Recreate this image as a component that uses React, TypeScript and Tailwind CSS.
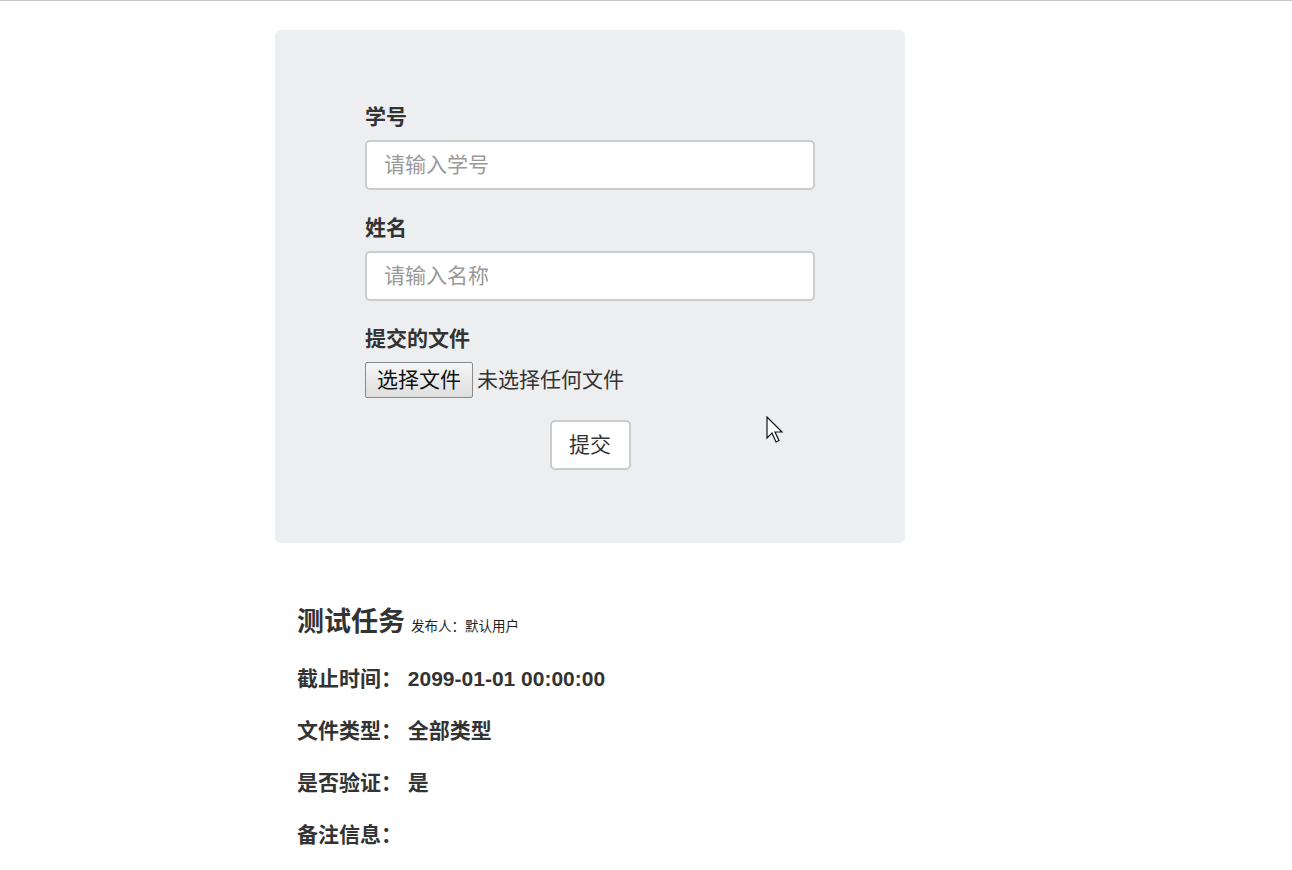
import React from "react";

export default function App() {
  const font = { fontFamily: '"Liberation Sans", "Noto Sans CJK SC", sans-serif' };
  return (
    <div className="min-h-[870px] w-full bg-white text-[#333]" style={font}>
      <div className="h-px w-full bg-[#c8c8c8]" />
      <div className="ml-[275px] mt-[29px] w-[630px] rounded-[6px] bg-[#eceeef] pt-[72px] pb-[73px] relative">
        <div className="ml-[90px] w-[450px]">
          <div className="h-[30px] text-[21px] font-bold leading-[30px] mb-[8px]">学号</div>
          <input
            className="block h-[50px] w-[450px] rounded-[5px] border-2 border-[#cccccc] bg-white px-[17px] text-[21px] outline-none placeholder:text-[#999]"
            placeholder="请输入学号"
            style={font}
          />
          <div className="mt-[23px] h-[30px] text-[21px] font-bold leading-[30px] mb-[8px]">姓名</div>
          <input
            className="block h-[50px] w-[450px] rounded-[5px] border-2 border-[#cccccc] bg-white px-[17px] text-[21px] outline-none placeholder:text-[#999]"
            placeholder="请输入名称"
            style={font}
          />
          <div className="mt-[23px] h-[30px] text-[21px] font-bold leading-[30px] mb-[8px]">提交的文件</div>
          <div className="flex h-[36px] items-center">
            <div className="flex h-[36px] w-[108px] items-center justify-center rounded-[2px] border border-[#8a8a8a] bg-gradient-to-b from-[#f6f6f6] to-[#dedede] text-[21px] font-normal text-[#111]">
              选择文件
            </div>
            <span className="ml-[4px] text-[21px] text-[#333]">未选择任何文件</span>
          </div>
          <div className="mt-[22px] flex justify-center">
            <button
              className="h-[50px] w-[81px] rounded-[5px] border-2 border-[#cccccc] bg-white text-[21px] text-[#333]"
              style={font}
            >
              提交
            </button>
          </div>
        </div>
        <svg className="absolute left-[491px] top-[386px]" width="20" height="28" viewBox="0 0 20 28">
          <path d="M1 1 L1 22 L6 17 L10 26 L13 24.5 L9 16 L16 16 Z" fill="white" stroke="#111" strokeWidth="1.2" strokeLinejoin="miter" />
        </svg>
      </div>
      <div className="ml-[297px] mt-[61px]">
        <div className="flex items-baseline h-[36px] leading-[36px]">
          <span className="text-[27px] font-bold">测试任务</span>
          <span className="ml-[6px] text-[13.5px] font-normal text-[#222]">发布人：默认用户</span>
        </div>
        <div className="mt-[24px] flex flex-col gap-[22px] text-[21px] font-bold">
          <div className="h-[30px] leading-[30px]">截止时间： 2099-01-01 00:00:00</div>
          <div className="h-[30px] leading-[30px]">文件类型： 全部类型</div>
          <div className="h-[30px] leading-[30px]">是否验证： 是</div>
          <div className="h-[30px] leading-[30px]">备注信息：</div>
        </div>
      </div>
    </div>
  );
}
